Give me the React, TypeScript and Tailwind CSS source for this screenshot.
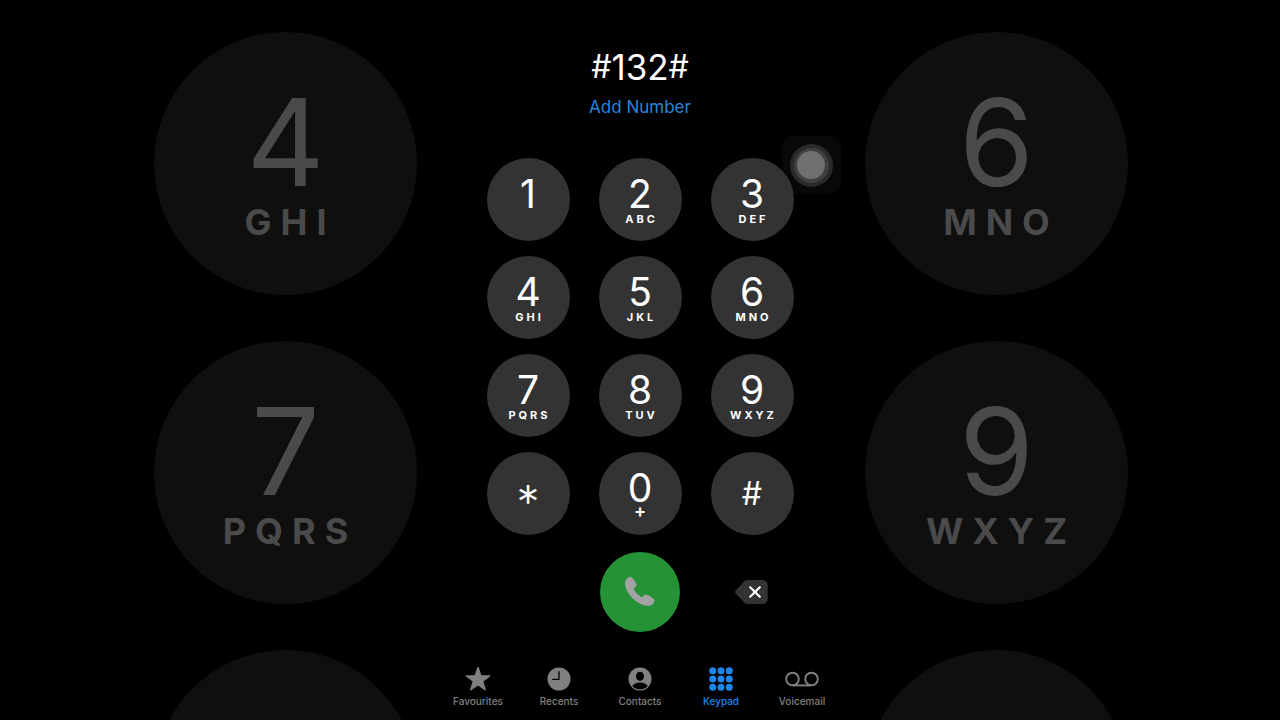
import React from "react";

type Key = { symbol: string; letters?: string; kind?: "star" | "hash" };

const keys: Key[] = [
  { symbol: "1" },
  { symbol: "2", letters: "ABC" },
  { symbol: "3", letters: "DEF" },
  { symbol: "4", letters: "GHI" },
  { symbol: "5", letters: "JKL" },
  { symbol: "6", letters: "MNO" },
  { symbol: "7", letters: "PQRS" },
  { symbol: "8", letters: "TUV" },
  { symbol: "9", letters: "WXYZ" },
  { symbol: "*", kind: "star" },
  { symbol: "0", letters: "+" },
  { symbol: "#", kind: "hash" },
];

const backdropKeys: { symbol?: string; letters?: string }[] = [
  { symbol: "4", letters: "GHI" },
  { symbol: "6", letters: "MNO" },
  { symbol: "7", letters: "PQRS" },
  { symbol: "9", letters: "WXYZ" },
  {},
  {},
];

function Backdrop() {
  return (
    <div aria-hidden="true" className="pointer-events-none absolute inset-0 overflow-hidden pt-8 pl-0.5">
      <div className="grid grid-cols-[263px_263px] justify-center gap-x-[448px] gap-y-[46px]">
        {backdropKeys.map((key, i) => (
          <div key={i} className="flex size-[263px] flex-col items-center rounded-full bg-[#0f0f0f] pt-[50px] text-[#4a4a4a]">
            <span className="text-[121px] leading-[120px]">{key.symbol}</span>
            <span className="pl-[9px] text-[36px] leading-[40px] font-bold tracking-[9px]">{key.letters}</span>
          </div>
        ))}
      </div>
    </div>
  );
}

function KeyButton({ symbol, letters, kind }: Key) {
  if (kind === "star") {
    return (
      <button type="button" className="flex size-[83px] justify-center rounded-full bg-[#333333] pt-5 text-[46px] leading-[60px] font-light">
        {symbol}
      </button>
    );
  }
  if (kind === "hash") {
    return (
      <button type="button" className="flex size-[83px] items-center justify-center rounded-full bg-[#333333] text-[32px] leading-10">
        {symbol}
      </button>
    );
  }
  return (
    <button type="button" className="flex size-[83px] flex-col items-center rounded-full bg-[#333333] pt-[17px]">
      <span className="text-[39px] leading-[38px]">{symbol}</span>
      {letters === "+" ? (
        <span className="text-lg leading-2 font-semibold">+</span>
      ) : (
        <span className="pl-[3px] text-[11px] leading-3 font-bold tracking-[3px]">{letters}</span>
      )}
    </button>
  );
}

function PhoneIcon() {
  return (
    <svg viewBox="0 0 30 31" className="h-[31px] w-[30px]" fill="#a3a3a3" aria-hidden="true">
      <path d="M1.5 3.1C3 1.3 5.3.2 6.7 1.3c1.700 1.500 3.200 3.900 4.400 6.100.9 1.700.4 2.700-.8 3.700l-1.100 1c-.7.7-.5 1.300 0 2 1.600 2.600 4 5 6.700 6.600.8.500 1.400.5 2-.2l1-1.200c1-1.100 2.200-1.200 3.700-.4 2.200 1.200 4.200 2.500 5.900 3.800 1.600 1.300.9 3.500-.8 5.300-1.700 1.800-4.500 2.500-7.600 1.600C10.600 26.900 3.200 19.500.6 10.900-.4 7.600 0 4.900 1.500 3.100Z" />
    </svg>
  );
}

function DeleteIcon() {
  return (
    <svg viewBox="0 0 33 24" className="h-6 w-[33px]" aria-hidden="true">
      <path d="M9.200 1.600C10.300.5 11.300 0 12.900 0H27.500A5.200 5.200 0 0 1 32.700 5.200V18.800A5.200 5.200 0 0 1 27.500 24H12.900c-1.600 0-2.600-.5-3.700-1.600L.9 13.800c-1-1.100-1-2.500 0-3.600Z" fill="#333333" />
      <path d="M15.200 7.200l9.600 9.600M24.800 7.200l-9.600 9.600" stroke="#fff" strokeWidth="2.200" strokeLinecap="round" />
    </svg>
  );
}

function StarIcon() {
  return (
    <svg viewBox="0 0 26 26" className="size-[26px]" fill="currentColor" stroke="currentColor" strokeWidth="1.400" strokeLinejoin="round" aria-hidden="true">
      <path d="M13 1.500l2.800 8.300 8.800.1-7 5.300 2.600 8.600L13 18.600l-7.200 5.200 2.600-8.600-7-5.300 8.800-.1Z" />
    </svg>
  );
}

function ClockIcon() {
  return (
    <svg viewBox="0 0 24 24" className="size-6" aria-hidden="true">
      <circle cx="12" cy="12" r="11.500" fill="currentColor" />
      <path d="M12 4.700V12.300H5.700" fill="none" stroke="#000" strokeWidth="1.300" strokeLinecap="round" strokeLinejoin="round" />
    </svg>
  );
}

function ContactIcon() {
  return (
    <svg viewBox="0 0 24 24" className="size-6" aria-hidden="true">
      <circle cx="12" cy="12" r="11.500" fill="currentColor" />
      <ellipse cx="12" cy="9.300" rx="4" ry="4.500" fill="#000" />
      <path d="M4.400 19.200C5.400 16.700 8.400 15.500 12 15.500s6.600 1.200 7.600 3.700C17.600 21.200 15 22.300 12 22.300S6.400 21.200 4.400 19.200Z" fill="#000" />
    </svg>
  );
}

function KeypadIcon() {
  const steps = [3.7, 12, 20.3];
  return (
    <svg viewBox="0 0 24 24" className="size-6" fill="currentColor" aria-hidden="true">
      {steps.map((y) => steps.map((x) => <circle key={`${x}-${y}`} cx={x} cy={y} r="3.500" />))}
    </svg>
  );
}

function VoicemailIcon() {
  return (
    <svg viewBox="0 0 34 24" className="h-6 w-[34px]" fill="none" stroke="currentColor" strokeWidth="1.900" aria-hidden="true">
      <circle cx="7.500" cy="12" r="6.300" />
      <circle cx="26.500" cy="12" r="6.300" />
      <path d="M7.500 18.400H26.500" />
    </svg>
  );
}

const tabs = [
  { label: "Favourites", icon: <StarIcon /> },
  { label: "Recents", icon: <ClockIcon /> },
  { label: "Contacts", icon: <ContactIcon /> },
  { label: "Keypad", icon: <KeypadIcon />, active: true },
  { label: "Voicemail", icon: <VoicemailIcon /> },
];

function AssistiveButton() {
  return (
    <button
      type="button"
      aria-label="Assistive menu"
      className="absolute -top-[22px] left-[295px] flex h-[58px] w-[59px] items-center justify-center rounded-xl bg-[#333333]/15"
    >
      <span className="flex size-[43px] items-center justify-center rounded-full bg-[#2a2a2a]">
        <span className="flex size-[35px] items-center justify-center rounded-full bg-[#404040]">
          <span className="size-7 rounded-full bg-[#707070]" />
        </span>
      </span>
    </button>
  );
}

export default function App() {
  return (
    <div className="relative min-h-screen overflow-hidden bg-black font-['Inter',sans-serif] text-white">
      <Backdrop />
      <main className="relative flex min-h-screen flex-col items-center pt-[45px]">
        <output className="flex items-center text-[35px] leading-[44px]">
          <span className="text-[32px]">#</span>
          <span>132</span>
          <span className="text-[32px]">#</span>
        </output>
        <button type="button" className="mt-1.5 text-[17px] leading-6 text-[#2b84dc]">
          Add Number
        </button>

        <div className="relative mt-[39px] grid grid-cols-[83px_83px_83px] gap-x-[29px] gap-y-[15px]">
          {keys.map((key) => (
            <KeyButton key={key.symbol} {...key} />
          ))}
          <div className="col-start-2 flex h-[83px] items-center justify-center">
            <button type="button" aria-label="Call" className="flex size-20 items-center justify-center rounded-full bg-[#259236]">
              <PhoneIcon />
            </button>
          </div>
          <button type="button" aria-label="Delete" className="flex h-[83px] items-center justify-center pr-0.5">
            <DeleteIcon />
          </button>
          <AssistiveButton />
        </div>

        <nav className="mt-auto grid grid-cols-[repeat(5,81px)] pb-[13px]">
          {tabs.map((tab) => (
            <a
              key={tab.label}
              href="#"
              aria-current={tab.active ? "page" : undefined}
              className={
                tab.active
                  ? "flex flex-col items-center gap-[3px] text-[10px] leading-3 font-medium text-[#1c86ee]"
                  : "flex flex-col items-center gap-[3px] text-[10px] leading-3 font-medium text-[#808080]"
              }
            >
              <span className="flex h-[26px] items-center">{tab.icon}</span>
              {tab.label}
            </a>
          ))}
        </nav>
      </main>
    </div>
  );
}
